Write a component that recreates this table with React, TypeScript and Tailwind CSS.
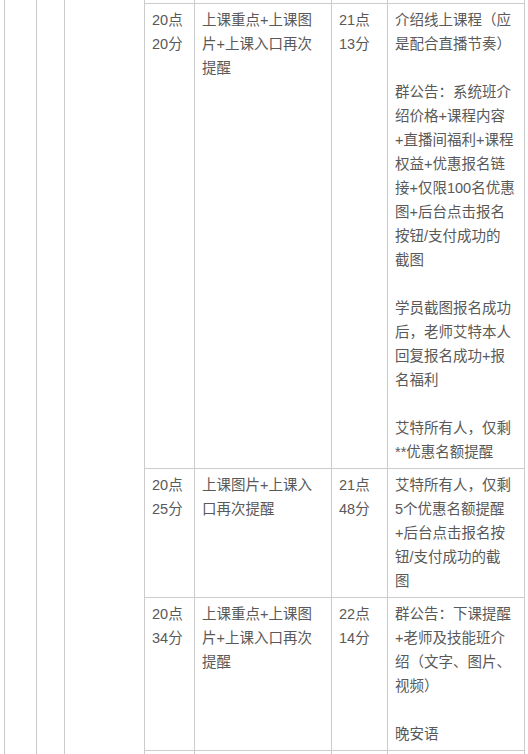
type RowData = {
  start: string[]
  content: string[]
  end: string[]
  notes: string[]
}

const rows: RowData[] = [
  {
    start: ["20点", "20分"],
    content: ["上课重点+上课图", "片+上课入口再次", "提醒"],
    end: ["21点", "13分"],
    notes: [
      "介绍线上课程（应",
      "是配合直播节奏）",
      "",
      "群公告：系统班介",
      "绍价格+课程内容",
      "+直播间福利+课程",
      "权益+优惠报名链",
      "接+仅限100名优惠",
      "图+后台点击报名",
      "按钮/支付成功的",
      "截图",
      "",
      "学员截图报名成功",
      "后，老师艾特本人",
      "回复报名成功+报",
      "名福利",
      "",
      "艾特所有人，仅剩",
      "**优惠名额提醒",
    ],
  },
  {
    start: ["20点", "25分"],
    content: ["上课图片+上课入", "口再次提醒"],
    end: ["21点", "48分"],
    notes: [
      "艾特所有人，仅剩",
      "5个优惠名额提醒",
      "+后台点击报名按",
      "钮/支付成功的截",
      "图",
    ],
  },
  {
    start: ["20点", "34分"],
    content: ["上课重点+上课图", "片+上课入口再次", "提醒"],
    end: ["22点", "14分"],
    notes: [
      "群公告：下课提醒",
      "+老师及技能班介",
      "绍（文字、图片、",
      "视频）",
      "",
      "晚安语",
    ],
  },
]

function Lines({ lines }: { lines: string[] }) {
  return (
    <>
      {lines.map((line, i) => (
        <p key={i} className="h-6 leading-6 whitespace-nowrap">
          {line || "\u00a0"}
        </p>
      ))}
    </>
  )
}

function Row({ data }: { data: RowData }) {
  return (
    <div className="flex border-t border-[#cccccc]">
      <div className="w-[50px] shrink-0 border-l border-[#cccccc] pl-[7px] py-1">
        <Lines lines={data.start} />
      </div>
      <div className="w-[137px] shrink-0 border-l border-[#cccccc] pl-[7px] py-1">
        <Lines lines={data.content} />
      </div>
      <div className="w-[56px] shrink-0 border-l border-[#cccccc] pl-[7px] py-1">
        <Lines lines={data.end} />
      </div>
      <div className="w-[137px] shrink-0 border-l border-[#cccccc] pl-[7px] py-1">
        <Lines lines={data.notes} />
      </div>
    </div>
  )
}

function EmptyRow({ className }: { className: string }) {
  return (
    <div className={`flex ${className}`}>
      <div className="w-[50px] shrink-0 border-l border-[#cccccc]" />
      <div className="w-[137px] shrink-0 border-l border-[#cccccc]" />
      <div className="w-[56px] shrink-0 border-l border-[#cccccc]" />
      <div className="w-[137px] shrink-0 border-l border-[#cccccc]" />
    </div>
  )
}

export default function App(): JSX.Element {
  return (
    <main
      className="w-[528px] bg-white text-[14.5px] text-[#595959]"
      style={{ fontFamily: '"Liberation Sans", "Noto Sans CJK SC", sans-serif' }}
    >
      <div className="flex pl-[4px]">
        <div className="w-[32px] shrink-0 border-l border-[#cccccc]" />
        <div className="w-[28px] shrink-0 border-l border-[#cccccc]" />
        <div className="w-[80px] shrink-0 border-l border-[#cccccc]" />
        <div className="flex flex-col border-r border-[#cccccc]">
          <EmptyRow className="h-[3px]" />
          {rows.map((row, i) => (
            <Row key={i} data={row} />
          ))}
          <EmptyRow className="h-12 border-t border-[#cccccc]" />
        </div>
      </div>
    </main>
  )
}
